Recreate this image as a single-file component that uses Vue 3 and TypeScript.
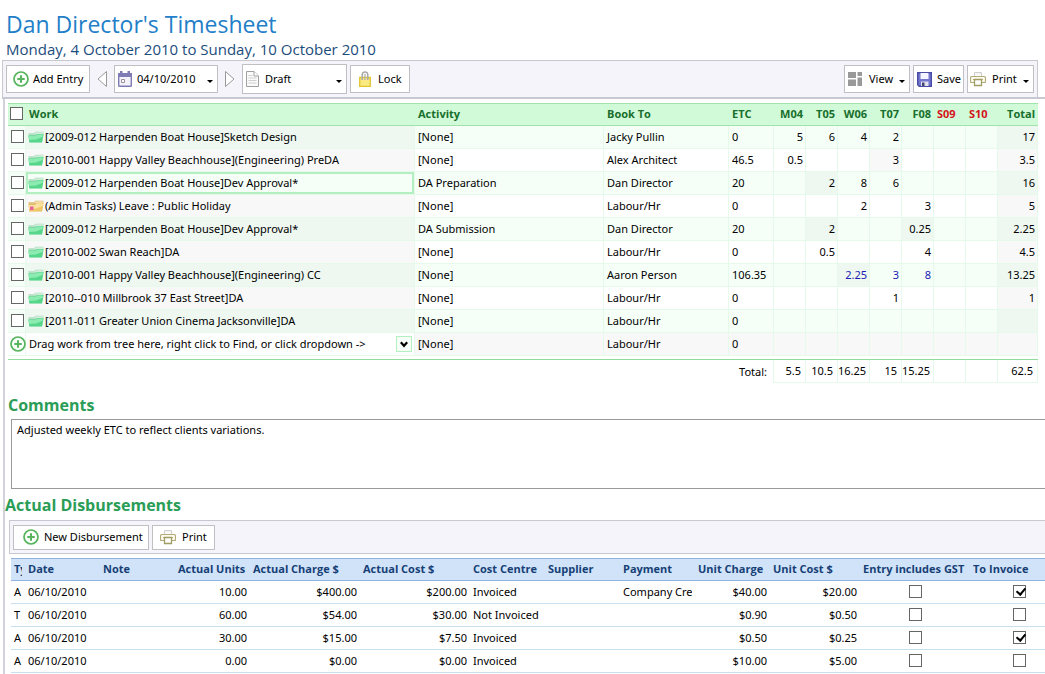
<script setup lang="ts">
import { ref } from 'vue'

interface Entry {
  work: string
  activity: string
  bookTo: string
  etc: string
  hours: string[]
  total: string
  admin?: boolean
  shaded?: number[]
  pending?: boolean
  selected?: boolean
}

interface Disbursement {
  type: string
  date: string
  note: string
  units: string
  charge: string
  cost: string
  centre: string
  supplier: string
  payment: string
  unitCharge: string
  unitCost: string
  gst: boolean
  invoice: boolean
}

const days = ['M04', 'T05', 'W06', 'T07', 'F08', 'S09', 'S10']
const date = ref('04/10/2010')
const status = ref('Draft')
const comments = ref('Adjusted weekly ETC to reflect clients variations.')
const newWork = ref('Drag work from tree here, right click to Find, or click dropdown ->')

const entries: Entry[] = [
  { work: '[2009-012 Harpenden Boat House]Sketch Design', activity: '[None]', bookTo: 'Jacky Pullin', etc: '0', hours: ['5', '6', '4', '2', '', '', ''], total: '17' },
  { work: '[2010-001 Happy Valley Beachhouse](Engineering) PreDA', activity: '[None]', bookTo: 'Alex Architect', etc: '46.5', hours: ['0.5', '', '', '3', '', '', ''], total: '3.5', shaded: [3] },
  { work: '[2009-012 Harpenden Boat House]Dev Approval*', activity: 'DA Preparation', bookTo: 'Dan Director', etc: '20', hours: ['', '2', '8', '6', '', '', ''], total: '16', shaded: [1], selected: true },
  { work: '(Admin Tasks) Leave : Public Holiday', activity: '[None]', bookTo: 'Labour/Hr', etc: '0', hours: ['', '', '2', '', '3', '', ''], total: '5', admin: true },
  { work: '[2009-012 Harpenden Boat House]Dev Approval*', activity: 'DA Submission', bookTo: 'Dan Director', etc: '20', hours: ['', '2', '', '', '0.25', '', ''], total: '2.25', shaded: [1, 4] },
  { work: '[2010-002 Swan Reach]DA', activity: '[None]', bookTo: 'Labour/Hr', etc: '0', hours: ['', '0.5', '', '', '4', '', ''], total: '4.5' },
  { work: '[2010-001 Happy Valley Beachhouse](Engineering) CC', activity: '[None]', bookTo: 'Aaron Person', etc: '106.35', hours: ['', '', '2.25', '3', '8', '', ''], total: '13.25', shaded: [2], pending: true },
  { work: '[2010--010 Millbrook 37 East Street]DA', activity: '[None]', bookTo: 'Labour/Hr', etc: '0', hours: ['', '', '', '1', '', '', ''], total: '1' },
  { work: '[2011-011 Greater Union Cinema Jacksonville]DA', activity: '[None]', bookTo: 'Labour/Hr', etc: '0', hours: ['', '', '', '', '', '', ''], total: '' },
]
const totals = ['5.5', '10.5', '16.25', '15', '15.25', '', '']

const disbursements: Disbursement[] = [
  { type: 'A', date: '06/10/2010', note: '', units: '10.00', charge: '$400.00', cost: '$200.00', centre: 'Invoiced', supplier: '', payment: 'Company Credit', unitCharge: '$40.00', unitCost: '$20.00', gst: false, invoice: true },
  { type: 'T', date: '06/10/2010', note: '', units: '60.00', charge: '$54.00', cost: '$30.00', centre: 'Not Invoiced', supplier: '', payment: '', unitCharge: '$0.90', unitCost: '$0.50', gst: false, invoice: false },
  { type: 'A', date: '06/10/2010', note: '', units: '30.00', charge: '$15.00', cost: '$7.50', centre: 'Invoiced', supplier: '', payment: '', unitCharge: '$0.50', unitCost: '$0.25', gst: false, invoice: true },
  { type: 'A', date: '06/10/2010', note: '', units: '0.00', charge: '$0.00', cost: '$0.00', centre: 'Invoiced', supplier: '', payment: '', unitCharge: '$10.00', unitCost: '$5.00', gst: false, invoice: false },
]
</script>

<template>
  <main class="page">
    <svg class="defs" aria-hidden="true">
      <symbol id="plus" viewBox="0 0 16 16">
        <circle cx="8" cy="8" r="7" fill="#fafffa" stroke="#55b45c" stroke-width="1.7" />
        <path d="M8 4.3v7.4M4.3 8h7.4" stroke="#55b45c" stroke-width="2" />
      </symbol>
      <symbol id="printer" viewBox="0 0 16 16">
        <path d="M4.5 5V1.5h7V5" fill="#fff" stroke="#cfcfcf" />
        <path d="M5.5 3h5" stroke="#d8d8d8" stroke-dasharray="1 1" />
        <path d="M4 11.5H1.5Q.5 11.5.5 10.500V7Q.5 5.500 2 5.500H14Q15.500 5.500 15.500 7v3.500q0 1-1 1H12" fill="#fdfcef" stroke="#b0ab79" stroke-width="1.2" />
        <path d="M3 8.500h10" stroke="#b0ab79" />
        <path d="M4.500 8.500h7v6h-7z" fill="#fff" stroke="#a29d63" stroke-width="1.3" />
      </symbol>
      <symbol id="folder" viewBox="0 0 16 12">
        <path d="M.5 2h5.500l1.500-1.300H15.500L14 11.300H1.500z" fill="#a9dcbd" />
        <path d="M1 2.500h5.500l1.500-1.300h7l-.3 2H1.200z" fill="#d3ebdb" />
        <path d="M.3 4.500H7L9 3h6.700L14 11.500H1.300z" fill="#55d68a" />
        <path d="M.8 5H7l2-1.500h6L14.500 6 8 8.500 1.200 9z" fill="#8cebb1" />
      </symbol>
      <symbol id="admin" viewBox="0 0 16 12">
        <path d="M.5 2h5.500l1.500-1.300H15.500L14 11.300H1.500z" fill="#d9b56c" />
        <path d="M1 2.500h5.500l1.500-1.300h7l-.3 2H1.200z" fill="#f3dfb2" />
        <path d="M.3 4.500H7L9 3h6.700L14 11.500H1.300z" fill="#eec868" />
        <path d="M.8 5H7l2-1.500h6L14.500 6 8 8.500 1.200 9z" fill="#fae3a0" />
        <path d="M2 6.500h3.500V10H2z" fill="#e8619a" />
      </symbol>
    </svg>

    <header class="heading">
      <h1>Dan Director's Timesheet</h1>
      <p>Monday, 4 October 2010 to Sunday, 10 October 2010</p>
    </header>

    <div class="bar-wrap">
      <div class="bar">
        <button class="btn add"><svg class="i16"><use href="#plus" /></svg>Add Entry</button>
        <button class="step" aria-label="Previous week">
          <svg width="10" height="18" viewBox="0 0 10 18"><path d="M9.500 1.500v15L1 9z" fill="#fff" stroke="#999" /></svg>
        </button>
        <div class="field date">
          <svg width="14" height="16" viewBox="0 0 14 16">
            <path d="M.7 3h12.600v11.500q0 .8-.8.8h-11q-.8 0-.8-.8z" fill="#f3f2fb" stroke="#7f7bb4" stroke-width="1.400" />
            <path d="M0 2h14v4H0zM2 0h2.500v3H2zM9.500 0H12v3H9.500z" fill="#7f7bb4" />
            <path d="M3.500 8.500h3v3h-3z" fill="#fff" stroke="#9b8f9b" />
          </svg>
          <input v-model="date" type="text" aria-label="Week starting" />
          <button class="drop" aria-label="Choose date"><i class="caret"></i></button>
        </div>
        <button class="step" aria-label="Next week">
          <svg width="10" height="18" viewBox="0 0 10 18"><path d="M.5 1.500v15L9 9z" fill="#fff" stroke="#999" /></svg>
        </button>
        <label class="field status">
          <svg width="13" height="16" viewBox="0 0 13 16">
            <path d="M.5.5h7.500l4.500 4.500v10.500H.5z" fill="#fafafa" stroke="#a0a0a0" />
            <path d="M8 .5V5h4.500" fill="#fff" stroke="#a0a0a0" />
            <path d="M2.500 4.500h4M2.500 7h8M2.500 9.500h8M2.500 12h8" stroke="#d0d0d0" />
          </svg>
          <select v-model="status" aria-label="Status"><option>Draft</option><option>Submitted</option></select>
          <i class="caret"></i>
        </label>
        <button class="btn lock">
          <svg width="12" height="16" viewBox="0 0 12 16">
            <path d="M.7 6.500h10.600v8.800H.7z" fill="#fbea84" stroke="#e0c52e" stroke-width="1.300" />
            <path d="M3.200 9V4Q3.200 1 6 1t2.800 3v5" fill="none" stroke="#aaa" stroke-width="1.600" />
            <path d="M6 3v6" stroke="#b5b5b5" stroke-width="1.500" />
          </svg>Lock
        </button>
        <span class="grow"></span>
        <button class="btn view">
          <svg width="15" height="14" viewBox="0 0 15 14"><path d="M0 0h8v6H0zM9.500 0H14v4H9.500zM0 7.500h8V14H0zM9.500 5.500H14V14H9.500z" fill="#999" /></svg>
          <span>View</span><i class="caret"></i>
        </button>
        <button class="btn save">
          <svg width="15" height="15" viewBox="0 0 15 15">
            <path d="M.7.7h13.600v13.600H2.200L.7 12.800z" fill="#7476cf" stroke="#484da3" stroke-width="1.400" />
            <path d="M3.500 1h8v6h-8z" fill="#f4f5ff" />
            <path d="M4 9.500h7.500V14H4z" fill="#dfe1ee" />
            <path d="M5 10.500h2.500V14H5z" fill="#40446f" />
          </svg>Save
        </button>
        <button class="btn print"><svg class="i16"><use href="#printer" /></svg><span>Print</span><i class="caret"></i></button>
      </div>
    </div>

    <div class="panel">
      <table class="sheet">
        <colgroup>
          <col class="c-check" /><col /><col class="c-activity" /><col class="c-book" /><col class="c-etc" />
          <col v-for="d in days" :key="d" class="c-day" /><col class="c-total" />
        </colgroup>
        <thead>
          <tr>
            <th class="check"><input type="checkbox" aria-label="Select all" /></th>
            <th>Work</th><th>Activity</th><th>Book To</th><th>ETC</th>
            <th v-for="(d, i) in days" :key="d" :class="i > 4 ? 'weekend' : 'num'">{{ d }}</th>
            <th class="num">Total</th>
          </tr>
        </thead>
        <tbody>
          <tr v-for="(e, i) in entries" :key="i">
            <td class="check"><input type="checkbox" :aria-label="'Select ' + e.work" /></td>
            <td class="work" :class="{ selected: e.selected }">
              <div class="work-in"><svg class="folder"><use :href="e.admin ? '#admin' : '#folder'" /></svg>{{ e.work }}</div>
            </td>
            <td>{{ e.activity }}</td>
            <td>{{ e.bookTo }}</td>
            <td>{{ e.etc }}</td>
            <td v-for="(h, k) in e.hours" :key="k" class="num" :class="{ shaded: e.shaded?.includes(k), pending: e.pending }">{{ h }}</td>
            <td class="num shaded">{{ e.total }}</td>
          </tr>
          <tr class="new">
            <td class="check"><svg class="i16"><use href="#plus" /></svg></td>
            <td class="new-work">
              <div class="new-in">
                <input v-model="newWork" type="text" aria-label="New work" />
                <button aria-label="Choose work">
                  <svg width="8" height="7" viewBox="0 0 8 7"><path d="M.8 1.200 4 4.800l3.200-3.600" fill="none" stroke="#000" stroke-width="2.200" /></svg>
                </button>
              </div>
            </td>
            <td>[None]</td><td>Labour/Hr</td><td>0</td>
            <td v-for="d in days" :key="d"></td><td></td>
          </tr>
        </tbody>
        <tfoot>
          <tr class="rule"><td colspan="13"></td></tr>
          <tr>
            <td colspan="5" class="label">Total:</td>
            <td v-for="(t, i) in totals" :key="i" class="num">{{ t }}</td>
            <td class="num">62.5</td>
          </tr>
        </tfoot>
      </table>

      <h2 id="comments-title" class="comments-title">Comments</h2>
      <textarea v-model="comments" aria-labelledby="comments-title"></textarea>

      <h2 class="disb-title">Actual Disbursements</h2>
      <div class="sub-bar">
        <button class="btn new-disb"><svg class="i16"><use href="#plus" /></svg>New Disbursement</button>
        <button class="btn print2"><svg class="i16"><use href="#printer" /></svg>Print</button>
      </div>
      <div class="disb-wrap">
        <table class="disb">
          <colgroup>
            <col class="d-type" /><col class="d-std" /><col class="d-std" /><col class="d-std" /><col class="d-wide" /><col class="d-wide" />
            <col class="d-std" /><col class="d-std" /><col class="d-std" /><col class="d-std" /><col class="d-mid" /><col class="d-wide" /><col />
          </colgroup>
          <thead>
            <tr>
              <th><div class="clip">Type</div></th><th>Date</th><th>Note</th><th>Actual Units</th><th>Actual Charge $</th><th>Actual Cost $</th>
              <th>Cost Centre</th><th>Supplier</th><th>Payment</th><th>Unit Charge</th><th>Unit Cost $</th><th>Entry includes GST</th><th>To Invoice</th>
            </tr>
          </thead>
          <tbody>
            <tr v-for="(d, i) in disbursements" :key="i">
              <td>{{ d.type }}</td>
              <td>{{ d.date }}</td>
              <td>{{ d.note }}</td>
              <td class="num">{{ d.units }}</td>
              <td class="num">{{ d.charge }}</td>
              <td class="num">{{ d.cost }}</td>
              <td>{{ d.centre }}</td>
              <td>{{ d.supplier }}</td>
              <td><div class="clip">{{ d.payment }}</div></td>
              <td class="num">{{ d.unitCharge }}</td>
              <td class="num">{{ d.unitCost }}</td>
              <td class="tick"><input v-model="d.gst" type="checkbox" aria-label="Entry includes GST" /></td>
              <td class="tick"><input v-model="d.invoice" type="checkbox" aria-label="To Invoice" /></td>
            </tr>
          </tbody>
        </table>
      </div>
    </div>
  </main>
</template>

<style>
body {
  margin: 0;
  background: #fff;
}
</style>

<style scoped>
* {
  box-sizing: border-box;
}
.page {
  display: flex;
  flex-direction: column;
  min-height: 100vh;
  overflow: hidden;
  font: 11px/16px "Noto Sans", "Open Sans", sans-serif;
  color: #000;
}
.defs {
  position: absolute;
  width: 0;
  height: 0;
}
svg {
  flex: none;
}
.i16 {
  width: 16px;
  height: 16px;
  display: block;
}
button, input, select, textarea {
  font: inherit;
  color: inherit;
  margin: 0;
}
h1, h2, p, th {
  font-family: "Open Sans", "Noto Sans", sans-serif;
}
.heading {
  padding: 8px 6px 1px;
}
h1 {
  margin: 0;
  font-size: 23px;
  line-height: 32px;
  font-weight: 400;
  color: #1f7fc9;
}
.heading p {
  margin: 0;
  font-size: 15px;
  line-height: 19px;
  color: #1c4c7c;
}
.bar-wrap {
  margin-left: 2px;
  border-bottom: 2px solid #c8c8d0;
}
.bar {
  display: flex;
  align-items: center;
  height: 37px;
  margin-right: 7px;
  padding: 0 3px;
  background: #f5f4fa;
  border: 1px solid #c8c8d0;
  border-bottom: 0;
}
.btn {
  display: flex;
  align-items: center;
  height: 28px;
  padding: 0 6px;
  border: 1px solid #c0c0c4;
  background: #fff;
  white-space: nowrap;
}
.add {
  width: 84px;
  gap: 4px;
}
.step {
  display: flex;
  justify-content: center;
  width: 24px;
  padding: 0;
  border: 0;
  background: none;
}
.field {
  display: flex;
  align-items: center;
  height: 28px;
  border: 1px solid #c0c0c4;
  background: #fff;
  padding: 0 4px 0 3px;
}
.field input, .field select {
  flex: 1;
  min-width: 0;
  padding: 0;
  border: 0;
  background: none;
  appearance: none;
  outline: 0;
}
.date {
  width: 104px;
  gap: 5px;
}
.status {
  width: 105px;
  height: 30px;
  gap: 6px;
}
.drop {
  padding: 0;
  border: 0;
  background: none;
}
.caret {
  display: block;
  flex: none;
  margin-top: 4px;
  border: 3px solid transparent;
  border-top-color: #000;
  border-bottom: 0;
}
.lock {
  width: 60px;
  margin-left: 3px;
  padding: 0 8px;
  gap: 7px;
}
.grow {
  flex: 1;
}
.view, .print {
  margin-left: 3px;
  gap: 6px;
}
.view {
  width: 66px;
  padding: 0 4px 0 3px;
}
.print {
  width: 67px;
  padding: 0 4px 0 2px;
}
.view .caret, .print .caret {
  margin-left: auto;
}
.save {
  width: 51px;
  margin-left: 3px;
  gap: 5px;
  padding: 0 3px;
}
.panel {
  flex: 1;
  margin-left: 3px;
  padding: 4px 0 0 3px;
  border-left: 2px solid #d2d2dc;
}
table {
  table-layout: fixed;
  border-collapse: separate;
  border-spacing: 0;
}
th, td {
  padding: 0;
  text-align: left;
  white-space: nowrap;
}
.sheet {
  width: calc(100% - 7px);
}
.c-check { width: 18px; }
.c-activity { width: 189px; }
.c-book { width: 125px; }
.c-etc { width: 45px; }
.c-day { width: 32px; }
.c-total { width: 40px; }
.sheet th {
  height: 23px;
  padding: 0 3px 1px;
  background: #d1fad8;
  border-top: 1px solid #9fe3ab;
  border-bottom: 1px solid #9fe3ab;
  color: #176f2c;
}
.sheet th.weekend {
  color: #d3141b;
}
.sheet td {
  height: 23px;
  padding: 0 2px 0 3px;
  border-right: 1px solid #e6faec;
  border-bottom: 1px solid #e6faec;
}
.sheet tbody tr:nth-child(odd) td {
  background: #f5fff8;
}
.sheet tbody tr:nth-child(odd) .shaded,
.sheet tbody tr:nth-child(odd) .work {
  background: #eef7f0;
}
.sheet tbody tr:nth-child(even) .shaded,
.sheet tbody tr:nth-child(even) .work,
.sheet tbody tr.new td {
  background: #f8f8f8;
}
.sheet .num {
  text-align: right;
}
.sheet td.pending {
  color: #1a1ab4;
}
.sheet .check {
  padding: 0 0 2px 2px;
}
.sheet td.check input {
  margin-left: 1px;
}
.sheet .new .check {
  padding-bottom: 0;
}
.sheet .work {
  padding: 0 2px;
}
.sheet tbody tr:nth-child(odd) .selected {
  background: #f5fff8;
  box-shadow: inset 0 0 0 2px #b4efc2;
}
.work-in {
  display: flex;
  align-items: center;
  gap: 1px;
}
.folder {
  width: 16px;
  height: 12px;
}
.sheet tbody tr.new .new-work,
.sheet tbody tr.new .check {
  background: #fff;
}
.new-in {
  display: flex;
  align-items: center;
}
.new-in input {
  flex: 1;
  min-width: 0;
  padding: 0;
  border: 0;
  background: none;
  outline: 0;
}
.new-in button {
  display: flex;
  align-items: center;
  justify-content: center;
  width: 16px;
  height: 16px;
  padding: 0;
  border: 1px solid #b4efc2;
  background: #f5fff8;
}
input[type="checkbox"] {
  display: block;
  appearance: none;
  width: 13px;
  height: 13px;
  border: 1px solid #666;
  background: #fff;
}
input[type="checkbox"]:checked::after {
  content: "";
  display: block;
  width: 4px;
  height: 7px;
  margin: 0 0 0 4px;
  border: solid #000;
  border-width: 0 2px 2px 0;
  transform: rotate(40deg);
}
.sheet .rule td {
  height: 4px;
  border: 0;
  border-bottom: 1px solid #8fdc9f;
}
.sheet tfoot .label {
  padding-right: 6px;
  border-bottom: 0;
  text-align: right;
}
.sheet tfoot .num {
  padding: 0 4px 0 0;
}
h2 {
  margin: 0;
  font-size: 16px;
  line-height: 24px;
  color: #2a9d57;
}
.comments-title {
  margin-top: 10px;
}
textarea {
  display: block;
  width: calc(100% - 3px);
  height: 70px;
  margin: 2px 0 0 3px;
  padding: 2px 5px;
  border: 1px solid #999;
  border-right: 0;
  resize: none;
  outline: 0;
}
.disb-title {
  margin: 4px 0 0 -3px;
}
.sub-bar {
  display: flex;
  align-items: center;
  gap: 3px;
  height: 34px;
  margin: 3px 0 0 1px;
  padding: 0 3px;
  background: #f5f4fa;
  border: 1px solid #c8c8d0;
  border-right: 0;
}
.sub-bar .btn {
  height: 25px;
}
.new-disb {
  width: 136px;
  gap: 5px;
  padding: 0 9px;
}
.print2 {
  width: 63px;
  gap: 6px;
  padding: 0 7px;
}
.disb-wrap {
  margin: 4px 0 0 3px;
  overflow: hidden;
}
.disb {
  width: 100%;
  min-width: 1058px;
}
.d-type { width: 14px; }
.d-std { width: 75px; }
.d-mid { width: 90px; }
.d-wide { width: 110px; }
.disb th {
  height: 23px;
  padding: 0 0 1px 3px;
  background: #d1e3f9;
  border-top: 1px solid #8fb4e0;
  border-bottom: 1px solid #8fb4e0;
  color: #163f76;
}
.disb td {
  height: 23px;
  padding: 0 3px;
  border-bottom: 1px solid #c8dff0;
}
.disb td:first-child {
  padding-right: 0;
}
.disb .num {
  text-align: right;
}
.clip {
  overflow: hidden;
  margin-right: 3px;
}
td .clip {
  margin-right: 0;
}
.disb .tick {
  padding: 0 3px 2px;
}
.disb .tick input {
  margin: 0 auto;
}
</style>
